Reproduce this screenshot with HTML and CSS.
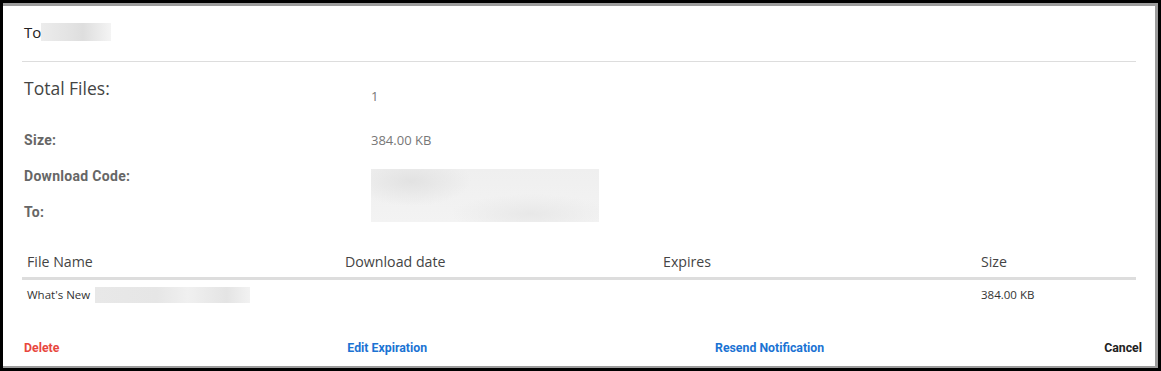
FILE: index.html
```html
<!DOCTYPE html>
<html>
<head>
    <title>Transfer Details</title>
    <link rel="stylesheet" href="styles.css">
</head>
<body>
    <div class="dialog">
        <!-- Recipient header -->
        <div class="dialog-header">
            <span class="to-label">To</span>
            <span class="blur blur-to"></span>
        </div>

        <!-- Transfer summary -->
        <div class="details">
            <div class="label label-large">Total Files:</div>
            <div class="value value-first">1</div>

            <div class="label">Size:</div>
            <div class="value">384.00 KB</div>

            <div class="label">Download Code:</div>
            <div class="value value-span"><span class="blur blur-code"></span></div>
            <div class="label">To:</div>
        </div>

        <!-- Files table -->
        <div class="files">
            <div class="files-head">
                <div>File Name</div>
                <div>Download date</div>
                <div>Expires</div>
                <div>Size</div>
            </div>
            <div class="files-row">
                <div class="file-name">What's New <span class="blur blur-file"></span></div>
                <div></div>
                <div></div>
                <div>384.00 KB</div>
            </div>
        </div>

        <!-- Actions -->
        <div class="actions">
            <a class="action action-delete">Delete</a>
            <a class="action action-link">Edit Expiration</a>
            <a class="action action-link">Resend Notification</a>
            <a class="action action-cancel">Cancel</a>
        </div>
    </div>
</body>
</html>
```

FILE: styles.css
```css
/* Page frame */
body {
    margin: 0;
    background-color: #000000;
    font-family: "Open Sans", Arial, sans-serif;
}

.dialog {
    margin: 3px;
    height: 365px;
    background-color: #ffffff;
    border-top: 3px solid #9c9c9c;
    border-right: 3px solid #9c9c9c;
    border-bottom: 2px solid #9c9c9c;
    box-sizing: border-box;
}

/* Header */
.dialog-header {
    display: flex;
    align-items: center;
    margin: 0 19px;
    padding: 16px 2px 19px;
    border-bottom: 1px solid #dddddd;
    height: 20px;
}

.to-label {
    font-size: 15px;
    color: #222222;
}

/* Blurred (redacted) areas */
.blur {
    display: inline-block;
}

.blur-to {
    width: 70px;
    height: 18px;
    background: linear-gradient(90deg, #ececec 0%, #e2e2e2 45%, #dedede 60%, #f4f4f4 100%);
}

.blur-code {
    width: 228px;
    height: 53px;
    background:
        radial-gradient(ellipse 60px 25px at 40px 12px, #e2e2e2, rgba(226,226,226,0)),
        radial-gradient(ellipse 80px 20px at 160px 45px, #e8e8e8, rgba(232,232,232,0)),
        linear-gradient(180deg, #efefef, #f3f3f3);
}

.blur-file {
    width: 155px;
    height: 16px;
    vertical-align: middle;
    background: linear-gradient(90deg, #e8e8e8 0%, #e6e6e6 40%, #f0f0f0 60%, #e4e4e4 85%, #f2f2f2 100%);
}

/* Summary grid */
.details {
    display: grid;
    grid-template-columns: 347px 1fr;
    grid-template-rows: 46px 36px 36px 36px;
    margin: 14px 19px 0;
    padding-left: 2px;
}

.label {
    font-family: Roboto, Arial, sans-serif;
    font-weight: bold;
    font-size: 14px;
    letter-spacing: 0.3px;
    line-height: 36px;
    color: #666666;
}

.label-large {
    font-family: "Open Sans", Arial, sans-serif;
    font-weight: normal;
    font-size: 17.5px;
    letter-spacing: 0;
    line-height: 24px;
    color: #444444;
}

.value {
    font-size: 13px;
    line-height: 36px;
    color: #777777;
}

.value-first {
    line-height: 18px;
    padding-top: 11px;
}

.value-span {
    grid-row: span 2;
    padding-top: 11px;
    line-height: 0;
}

/* Files table */
.files {
    margin: 22px 19px 0;
}

.files-head,
.files-row {
    display: grid;
    grid-template-columns: 318px 318px 318px 1fr;
}

.files-head {
    font-size: 14.2px;
    line-height: 20px;
    color: #444444;
    padding-bottom: 5px;
    border-bottom: 3px solid #dddddd;
}

.files-head div,
.files-row div {
    padding-left: 5px;
}

.files-row {
    font-size: 11.5px;
    line-height: 20px;
    color: #333333;
    padding-top: 5px;
}

.file-name {
    display: flex;
    align-items: center;
    gap: 5px;
}

/* Footer actions */
.actions {
    display: flex;
    padding: 33px 13px 0 21px;
}

.action {
    font-family: Roboto, Arial, sans-serif;
    font-weight: bold;
    font-size: 12.3px;
    line-height: 20px;
    white-space: nowrap;
    flex-shrink: 0;
    cursor: pointer;
}

.action-delete {
    color: #e8473e;
}

.action-link {
    color: #1b73d3;
    margin-left: 288px;
}

.action-cancel {
    color: #222222;
    margin-left: auto;
}
```
